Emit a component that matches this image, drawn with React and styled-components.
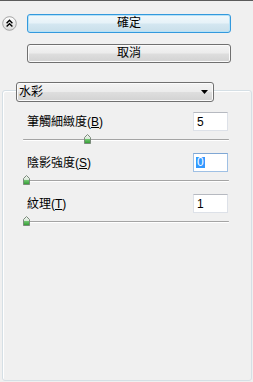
import React from "react";
import styled, { createGlobalStyle } from "styled-components";

const Global = createGlobalStyle`
  html, body { margin: 0; padding: 0; background: #f0f0f0; }
  body { font-family: "Liberation Sans", "Noto Sans CJK TC", sans-serif; font-size: 12px; color: #000; }
  * { box-sizing: border-box; }
`;

const Page = styled.div`
  height: 100vh;
  display: flex;
  flex-direction: column;
  border-top: 1px solid #5b5b5b;
  background: #f0f0f0;
`;

const Header = styled.div`
  display: flex;
  align-items: flex-start;
  padding: 13px 0 0 2px;
`;

const CollapseIcon = styled.div`
  width: 15px;
  height: 15px;
  margin-top: 2px;
  margin-right: 10px;
  display: flex;
`;

const ButtonColumn = styled.div`
  display: flex;
  flex-direction: column;
  gap: 11px;
  width: 204px;
`;

const Button = styled.button`
  height: 19px;
  width: 100%;
  padding: 0;
  margin: 0;
  font: inherit;
  font-size: 12px;
  line-height: 17px;
  color: #000;
  border-radius: 3px;
  border: 1px solid ${(p) => (p.$primary ? "#3399dd" : "#707070")};
  box-shadow: inset 0 0 0 1px ${(p) => (p.$primary ? "#b6e2f7" : "#fbfbfb")};
  background: ${(p) =>
    p.$primary
      ? "linear-gradient(#f2f8fb 0%, #e6f2f8 48%, #d4e7f1 52%, #c9dfea 100%)"
      : "linear-gradient(#f3f3f3 0%, #ececec 48%, #dedede 52%, #d2d2d2 100%)"};
`;

const Group = styled.div`
  flex: 1;
  margin: 27px 1px 1px 2px;
  border: 1px solid #d5dfe5;
  border-radius: 3px;
  box-shadow: inset 1px 1px 0 #fff;
  display: flex;
  flex-direction: column;
`;

const Combo = styled.div`
  margin: -9px 0 0 13px;
  width: 198px;
  height: 20px;
  border: 1px solid #707070;
  border-radius: 3px;
  box-shadow: inset 0 0 0 1px #fbfbfb;
  background: linear-gradient(#f3f3f3 0%, #ececec 48%, #dedede 52%, #d2d2d2 100%);
  display: flex;
  align-items: center;
  justify-content: space-between;
  padding: 0 5px 0 2px;
`;

const ComboText = styled.span`
  font-size: 12px;
  line-height: 18px;
`;

const Settings = styled.div`
  margin-top: 10px;
  padding: 0 22px 0 20px;
  display: flex;
  flex-direction: column;
  gap: 7px;
`;

const Setting = styled.div`
  display: flex;
  flex-direction: column;
`;

const LabelRow = styled.div`
  height: 19px;
  display: flex;
  align-items: center;
  justify-content: space-between;
  padding: 0 1px 0 4px;
`;

const Label = styled.span`
  font-size: 12px;
  line-height: 14px;
  u { text-decoration: underline; text-underline-offset: 1px; }
`;

const TextBox = styled.div`
  width: 35px;
  height: 19px;
  background: #fff;
  border: 1px solid ${(p) => (p.$focused ? "#9fc0e4" : "#dde1e8")};
  border-top-color: ${(p) => (p.$focused ? "#7fa7d4" : "#b6b9c0")};
  display: flex;
  align-items: center;
  padding-left: 2px;
  font-size: 12px;
`;

const Selected = styled.span`
  background: #3399ff;
  color: #fff;
  line-height: 11px;
  height: 11px;
  padding: 0 1px;
  display: inline-block;
`;

const Plain = styled.span`
  padding-left: 1px;
`;

const Track = styled.div`
  position: relative;
  height: 15px;
`;

const Groove = styled.div`
  position: absolute;
  left: 0;
  right: 0;
  top: 8px;
  height: 1px;
  background: #a4a4a4;
  border-radius: 1px;
  box-shadow: 0 1px 0 #ffffff;
`;

const Thumb = styled.svg`
  position: absolute;
  top: 3px;
  width: 7px;
  height: 10px;
  display: block;
`;

function Slider({ value, min, max }) {
  const usable = 205 - 7;
  const left = Math.round(((value - min) / (max - min)) * usable);
  return (
    <Track>
      <Groove />
      <Thumb viewBox="0 0 7 10" style={{ left }}>
        <defs>
          <linearGradient id="tg" x1="0" y1="0" x2="0" y2="1">
            <stop offset="0" stopColor="#f4f4f4" />
            <stop offset="0.45" stopColor="#d8ead8" />
            <stop offset="0.55" stopColor="#6cc46c" />
            <stop offset="1" stopColor="#2f9a2f" />
          </linearGradient>
        </defs>
        <path d="M3.5 0.5 L6.5 3.5 L6.5 9.5 L0.5 9.5 L0.5 3.5 Z" fill="url(#tg)" stroke="#7b8a7b" strokeWidth="1" />
      </Thumb>
    </Track>
  );
}

const settings = [
  { label: "筆觸細緻度", key: "B", value: 5, min: 1, max: 14 },
  { label: "陰影強度", key: "S", value: 0, min: 0, max: 10, focused: true },
  { label: "紋理", key: "T", value: 1, min: 1, max: 3 },
];

export default function App() {
  return (
    <>
      <Global />
      <Page>
        <Header>
          <CollapseIcon>
            <svg width="15" height="15" viewBox="0 0 15 15">
              <defs>
                <linearGradient id="cg" x1="0" y1="0" x2="0" y2="1">
                  <stop offset="0" stopColor="#ffffff" />
                  <stop offset="1" stopColor="#dadada" />
                </linearGradient>
              </defs>
              <circle cx="7.5" cy="7.5" r="6.8" fill="url(#cg)" stroke="#9a9a9a" strokeWidth="0.9" />
              <path d="M4.6 7.2 L7.5 4.3 L10.4 7.2 M4.6 10.6 L7.5 7.7 L10.4 10.6" fill="none" stroke="#000" strokeWidth="1.4" />
            </svg>
          </CollapseIcon>
          <ButtonColumn>
            <Button $primary>確定</Button>
            <Button>取消</Button>
          </ButtonColumn>
        </Header>
        <Group>
          <Combo>
            <ComboText>水彩</ComboText>
            <svg width="7" height="4" viewBox="0 0 7 4">
              <path d="M0 0 L7 0 L3.5 4 Z" fill="#000" />
            </svg>
          </Combo>
          <Settings>
            {settings.map((s) => (
              <Setting key={s.key}>
                <LabelRow>
                  <Label>
                    {s.label}(<u>{s.key}</u>)
                  </Label>
                  <TextBox $focused={s.focused}>
                    {s.focused ? <Selected>{s.value}</Selected> : <Plain>{s.value}</Plain>}
                  </TextBox>
                </LabelRow>
                <Slider value={s.value} min={s.min} max={s.max} />
              </Setting>
            ))}
          </Settings>
        </Group>
      </Page>
    </>
  );
}
